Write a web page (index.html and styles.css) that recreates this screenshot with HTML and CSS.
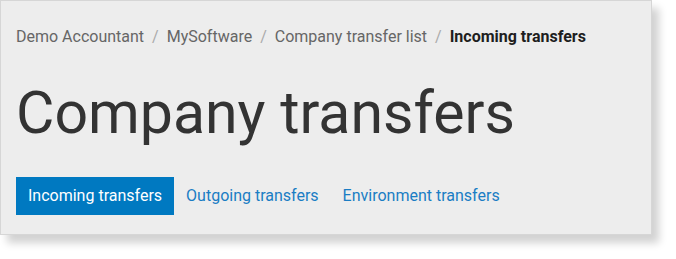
FILE: index.html
```html
<!DOCTYPE html>
<html lang="en">
<head>
    <meta charset="UTF-8">
    <title>Company transfers</title>
    <link rel="stylesheet" href="styles.css">
</head>
<body>
    <!-- Page header panel -->
    <div class="page-panel">
        <nav class="breadcrumb">
            <a href="#">Demo Accountant</a>
            <span class="sep">/</span>
            <a href="#">MySoftware</a>
            <span class="sep">/</span>
            <a href="#">Company transfer list</a>
            <span class="sep">/</span>
            <span class="current">Incoming transfers</span>
        </nav>

        <h1 class="page-title">Company transfers</h1>

        <ul class="tabs">
            <li><a href="#" class="tab active">Incoming transfers</a></li>
            <li><a href="#" class="tab">Outgoing transfers</a></li>
            <li><a href="#" class="tab">Environment transfers</a></li>
        </ul>
    </div>
</body>
</html>
```

FILE: styles.css
```css
:root {
    --panel-bg: #ededed;
    --panel-border: #d6d6d6;
    --text-color: #333333;
    --muted-text: #666666;
    --primary-color: #0079c1;
    --link-color: #1a7dc4;
}

* {
    margin: 0;
    padding: 0;
    box-sizing: border-box;
    font-family: Roboto, "Liberation Sans", sans-serif;
}

html, body {
    min-height: 259px;
}

body {
    background-color: #ffffff;
    color: var(--text-color);
    padding-bottom: 24px;
}

.page-panel {
    width: 652px;
    height: 235px;
    background-color: var(--panel-bg);
    border: 1px solid var(--panel-border);
    box-shadow: 7px 8px 8px rgba(0, 0, 0, 0.18);
    padding: 26px 15px 0;
}

/* Breadcrumb */
.breadcrumb {
    display: flex;
    align-items: center;
    gap: 8px;
    font-size: 16px;
    line-height: 20px;
}

.breadcrumb a {
    color: var(--muted-text);
    text-decoration: none;
}

.breadcrumb .sep {
    color: #aaaaaa;
}

.breadcrumb .current {
    color: #1e1e1e;
    font-weight: bold;
}

/* Title */
.page-title {
    font-size: 59px;
    font-weight: 400;
    line-height: 72px;
    margin-top: 30px;
    color: var(--text-color);
}

/* Tabs */
.tabs {
    list-style: none;
    display: flex;
    margin-top: 28px;
}

.tab {
    display: block;
    padding: 0 12px;
    height: 38px;
    line-height: 38px;
    font-size: 16px;
    color: var(--link-color);
    text-decoration: none;
}

.tab.active {
    background-color: var(--primary-color);
    color: #ffffff;
}
```
